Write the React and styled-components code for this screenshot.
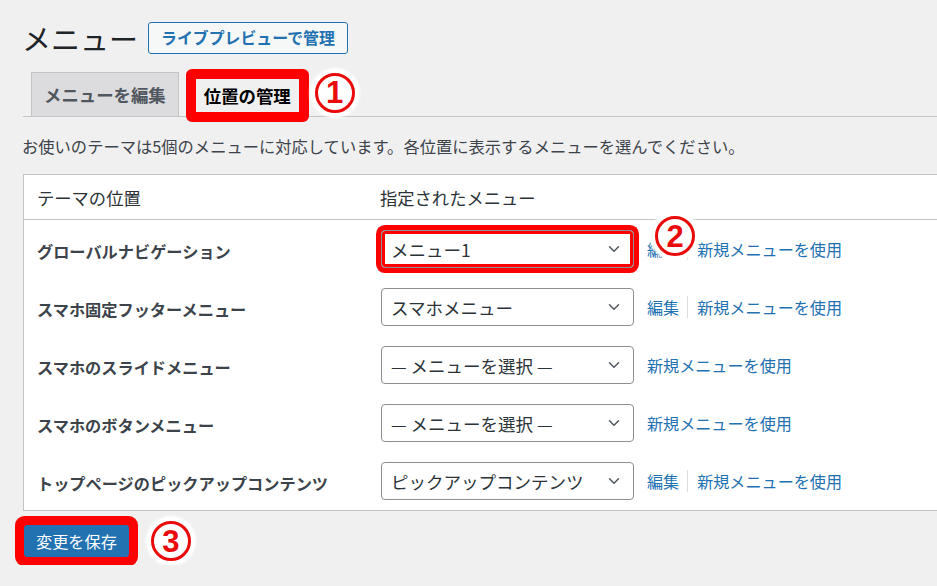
import React from "react";
import styled, { createGlobalStyle } from "styled-components";
import { ChevronDown } from "lucide-react";

const GlobalStyle = createGlobalStyle`
  html, body {
    margin: 0;
    background: #f0f0f1;
    overflow: hidden;
  }
  body {
    font-family: "Noto Sans CJK JP", "Noto Sans", sans-serif;
    color: #1d2327;
  }
`;

const Page = styled.div`
  padding: 22px 0 0 23px;
`;

const TitleRow = styled.div`
  display: flex;
  align-items: center;
  gap: 10px;
  height: 32px;
`;

const Title = styled.h1`
  margin: 0 0 0 -1px;
  font-size: 29px;
  font-weight: 400;
  line-height: 32px;
  color: #1d2327;
`;

const OutlineButton = styled.button`
  height: 32px;
  padding: 0 12px;
  border: 1px solid #2271b1;
  border-radius: 3px;
  background: #f6f7f7;
  color: #2271b1;
  font-family: inherit;
  font-size: 15.9px;
  font-weight: 700;
  line-height: 30px;
`;

const TabBar = styled.div`
  display: flex;
  align-items: flex-end;
  margin-top: 15px;
  padding-left: 8px;
  height: 47px;
  border-bottom: 1px solid #c3c4c7;
`;

const Tab = styled.div`
  box-sizing: border-box;
  height: ${(p) => (p.$active ? "53px" : "44px")};
  margin-bottom: ${(p) => (p.$active ? "-6px" : "0")};
  margin-left: ${(p) => (p.$active ? "7px" : "0")};
  padding: 0 ${(p) => (p.$active ? "8px" : "12px")};
  display: flex;
  align-items: center;
  border: ${(p) => (p.$active ? "10px solid #ff0000" : "1px solid #c3c4c7")};
  border-bottom: ${(p) => (p.$active ? "10px solid #ff0000" : "none")};
  border-radius: ${(p) => (p.$active ? "6px" : "0")};
  background: ${(p) => (p.$active ? "#f0f0f1" : "#dcdcde")};
  color: ${(p) => (p.$active ? "#000" : "#50575e")};
  font-size: 17.4px;
  font-weight: 700;
  white-space: nowrap;
`;

const Halo = styled.span`
  position: ${(p) => (p.$over ? "absolute" : "static")};
  left: ${(p) => (p.$over ? "4px" : "auto")};
  top: ${(p) => (p.$over ? "-25px" : "auto")};
  flex: none;
  width: 48px;
  height: 48px;
  margin-left: ${(p) => p.$gap || "0"};
  align-self: center;
  border-radius: 50%;
  background: #fff;
  box-shadow: 0 0 3px 1px #fff;
  display: flex;
  align-items: center;
  justify-content: center;
`;

const Ring = styled.span`
  box-sizing: border-box;
  width: 40px;
  height: 40px;
  border: 3.5px solid #ea0a0a;
  border-radius: 50%;
  display: flex;
  align-items: center;
  justify-content: center;
  color: #ea0a0a;
  font-family: "Liberation Sans", Arial, sans-serif;
  font-size: 31px;
  font-weight: 700;
  line-height: 1;
`;

const Badge = ({ n, over, gap }) => (
  <Halo $over={over} $gap={gap}>
    <Ring>{n}</Ring>
  </Halo>
);

const Description = styled.p`
  margin: 17px 0 0 -1px;
  font-size: 16.3px;
  line-height: 24px;
  color: #3c434a;
`;

const Table = styled.div`
  margin-top: 16px;
  width: calc(100% + 20px);
  background: #fff;
  border: 1px solid #c3c4c7;
`;

const Row = styled.div`
  display: grid;
  grid-template-columns: 343px 1fr;
  align-items: center;
  height: ${(p) => (p.$head ? "44px" : "58px")};
  border-bottom: ${(p) => (p.$head ? "1px solid #c3c4c7" : "none")};
  padding-left: 13px;
`;

const HeadCell = styled.div`
  font-size: 17.3px;
  line-height: 24px;
  color: #2c3338;
  padding-top: 1px;
`;

const Label = styled.div`
  font-size: 16.2px;
  font-weight: 700;
  color: #3c434a;
  padding-top: 4px;
  white-space: nowrap;
`;

const Controls = styled.div`
  display: flex;
  align-items: center;
  margin-left: 1px;
`;

const SelectBox = styled.div`
  box-sizing: border-box;
  width: 253px;
  height: 38px;
  padding: 0 10px 0 9px;
  display: flex;
  align-items: center;
  justify-content: space-between;
  border: 1px solid #8c8f94;
  border-radius: 4px;
  background: #fff;
  color: #2c3338;
  font-size: 17.5px;
  white-space: nowrap;
  box-shadow: ${(p) =>
    p.$highlight ? "0 0 0 5px #ff0000, inset 0 0 0 3px #ff0000" : "none"};
  svg {
    flex: none;
    color: #50575e;
  }
`;

const Links = styled.div`
  position: relative;
  display: flex;
  align-items: center;
  margin-left: 13px;
`;

const Link = styled.a`
  color: #2271b1;
  font-size: 16.1px;
  text-decoration: none;
  white-space: nowrap;
  cursor: pointer;
`;

const Sep = styled.span`
  width: 1px;
  height: 22px;
  background: #dcdcde;
  margin: 0 9px 0 8px;
`;

const Footer = styled.div`
  display: flex;
  align-items: center;
  margin-top: 6px;
  margin-left: 1px;
`;

const PrimaryButton = styled.button`
  height: 32px;
  padding: 0 11px;
  border: 1px solid #2271b1;
  border-radius: 3px;
  background: #2271b1;
  color: #fff;
  font-family: inherit;
  font-size: 16.2px;
  line-height: 30px;
  box-shadow: 0 0 0 9px #ff0000;
`;

const rows = [
  { label: "グローバルナビゲーション", value: "メニュー1", edit: true, mark: 2 },
  { label: "スマホ固定フッターメニュー", value: "スマホメニュー", edit: true },
  { label: "スマホのスライドメニュー", value: "— メニューを選択 —" },
  { label: "スマホのボタンメニュー", value: "— メニューを選択 —" },
  { label: "トップページのピックアップコンテンツ", value: "ピックアップコンテンツ", edit: true },
];

export default function App() {
  return (
    <>
      <GlobalStyle />
      <Page>
        <TitleRow>
          <Title>メニュー</Title>
          <OutlineButton>ライブプレビューで管理</OutlineButton>
        </TitleRow>

        <TabBar>
          <Tab>メニューを編集</Tab>
          <Tab $active>位置の管理</Tab>
          <Badge n="1" gap="2px" />
        </TabBar>

        <Description>
          お使いのテーマは5個のメニューに対応しています。各位置に表示するメニューを選んでください。
        </Description>

        <Table>
          <Row $head>
            <HeadCell>テーマの位置</HeadCell>
            <HeadCell>指定されたメニュー</HeadCell>
          </Row>
          {rows.map((r) => (
            <Row key={r.label}>
              <Label>{r.label}</Label>
              <Controls>
                <SelectBox $highlight={!!r.mark}>
                  <span>{r.value}</span>
                  <ChevronDown size={18} strokeWidth={2} />
                </SelectBox>
                <Links>
                  {r.edit && (
                    <>
                      <Link>編集</Link>
                      <Sep />
                    </>
                  )}
                  <Link>新規メニューを使用</Link>
                  {r.mark && <Badge n={r.mark} over />}
                </Links>
              </Controls>
            </Row>
          ))}
        </Table>

        <Footer>
          <PrimaryButton>変更を保存</PrimaryButton>
          <Badge n="3" gap="18px" />
        </Footer>
      </Page>
    </>
  );
}
